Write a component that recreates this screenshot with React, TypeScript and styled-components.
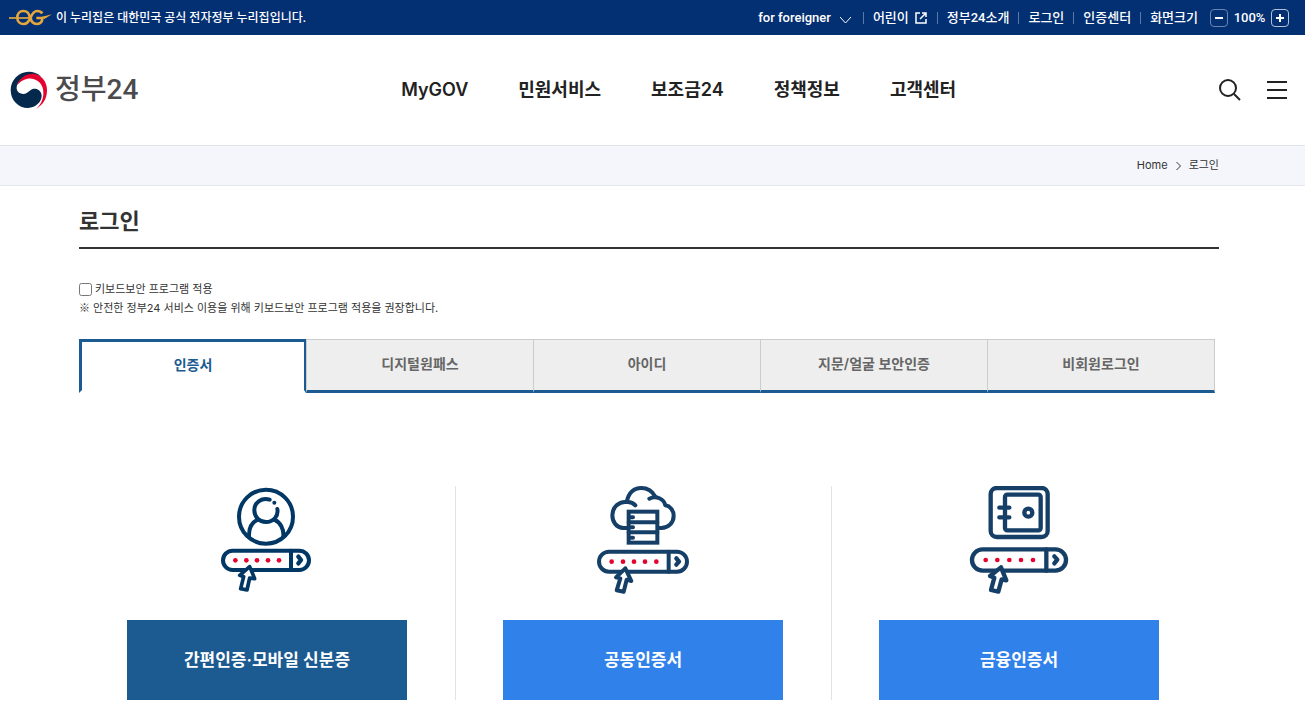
import React from "react";
import styled, { createGlobalStyle } from "styled-components";

const NAVY = "#003764";
const BLUE = "#1c5a92";
const RED = "#e4032e";

const GlobalStyle = createGlobalStyle`
  *, *::before, *::after { box-sizing: border-box; }
  body {
    margin: 0;
    background: #fff;
    color: #333;
    font-family: Inter, "Noto Sans CJK KR", sans-serif;
    font-size: 11px;
    line-height: 19px;
  }
  h1, p, ul, ol { margin: 0; padding: 0; }
  ul, ol { list-style: none; }
  a { color: inherit; text-decoration: none; }
  button { font: inherit; color: inherit; border: 0; padding: 0; background: none; cursor: pointer; }
  svg { display: block; flex: none; }
`;

const TopBar = styled.div`
  display: flex;
  align-items: center;
  justify-content: space-between;
  height: 35px;
  padding: 0 16px 0 9px;
  background: #032f73;
  color: #fff;
  font-family: Roboto, "Noto Sans CJK KR", sans-serif;
  font-size: 13px;
  font-weight: 500;
`;

const Official = styled.p`
  display: flex;
  align-items: center;
  gap: 4px;
  font-size: 12px;
  line-height: 20px;
`;

const UtilList = styled.ul`
  display: flex;
  align-items: center;
`;

const UtilItem = styled.li`
  display: flex;
  align-items: center;

  & + &::before {
    content: "";
    width: 1px;
    height: 12px;
    margin: 0 9px;
    background: #5c78a6;
  }
`;

const UtilLink = styled.a`
  display: flex;
  align-items: center;
  gap: 5px;
`;

const UtilButton = styled.button`
  display: flex;
  align-items: center;
  gap: 8px;
`;

const ZoomGroup = styled.div`
  display: flex;
  align-items: center;
  gap: 4px;
  margin-left: 12px;
`;

const ZoomValue = styled.span`
  min-width: 35px;
  text-align: center;
`;

const ZoomButton = styled.button<{ $dim?: boolean }>`
  display: grid;
  place-items: center;
  width: 18px;
  height: 18px;
  border: 1px solid ${(p) => (p.$dim ? "#6b84ae" : "#b3c0d5")};
  border-radius: 4px;
`;

const Header = styled.header`
  display: flex;
  align-items: center;
  justify-content: space-between;
  height: 110px;
  padding: 0 18px 0 10px;
`;

const Logo = styled.a`
  display: flex;
  align-items: center;
  gap: 7px;
  color: #4b4b4d;
  font-family: Roboto, "Noto Sans CJK KR", sans-serif;
  font-size: 28px;
  font-weight: 500;
  line-height: 38px;
`;

const MainNav = styled.ul`
  display: flex;
  gap: 50px;
  color: #222;
  font-size: 18px;
  font-weight: 600;
  line-height: 28px;
`;

const Tools = styled.div`
  display: flex;
  align-items: center;
  gap: 26px;
`;

const CrumbBar = styled.nav`
  height: 41px;
  padding: 0 86px 0 79px;
  border-top: 1px solid #dfe3ea;
  border-bottom: 1px solid #e4e7ee;
  background: #f5f6fb;
`;

const Crumbs = styled.ol`
  display: flex;
  align-items: center;
  justify-content: flex-end;
  gap: 8px;
  height: 39px;

  li {
    display: flex;
    align-items: center;
    gap: 8px;
  }
`;

const Main = styled.main`
  padding: 0 86px 22px 79px;
`;

const Title = styled.h1`
  padding: 17px 0 8px;
  border-bottom: 2px solid #333;
  font-size: 22px;
  font-weight: 600;
  line-height: 36px;
`;

const Security = styled.div`
  margin: 31px 0 21px;
`;

const NoteMark = styled.span`
  font-family: "Noto Sans CJK KR", sans-serif;
  line-height: 1;
`;

const CheckLabel = styled.label`
  display: flex;
  align-items: center;
  gap: 3px;
`;

const Checkbox = styled.input`
  width: 13px;
  height: 13px;
  margin: 0;
`;

const Tabs = styled.div`
  display: grid;
  grid-template-columns: repeat(5, 1fr);
  height: 54px;
  margin-right: 5px;
  font-size: 14px;
  font-weight: 600;
`;

const Tab = styled.button<{ $active?: boolean }>`
  padding-bottom: 3px;
  border-style: solid;
  border-width: ${(p) => (p.$active ? "3px 2px 3px 3px" : "1px 0 3px 1px")};
  border-color: ${(p) =>
    p.$active ? `${BLUE} ${BLUE} #fff` : `#ccc #ccc ${BLUE}`};
  background: ${(p) => (p.$active ? "#fff" : "#eee")};
  color: ${(p) => (p.$active ? BLUE : "#666")};

  &:last-child {
    margin-right: -1px;
    border-right-width: 1px;
  }
`;

const Methods = styled.ul`
  display: grid;
  grid-template-columns: repeat(3, 1fr);
  margin: 93px 12px 0 0;
`;

const Method = styled.li`
  display: flex;
  flex-direction: column;
  align-items: center;
  gap: 25px;
  padding: 0 48px;

  & + & {
    box-shadow: inset 1px 0 0 #e3e3e3;
  }
`;

const MethodButton = styled.button<{ $primary?: boolean }>`
  width: 100%;
  height: 80px;
  background: ${(p) => (p.$primary ? BLUE : "#3181ea")};
  color: #fff;
  font-size: 17px;
  font-weight: 600;
`;

const EgMark = () => (
  <svg width="43" height="17" viewBox="0 0 129 51" fill="none" stroke="#e3a73e" strokeWidth="8" aria-hidden="true">
    <path d="M0 27H62" strokeWidth="5" />
    <path d="M62 27C62 13 53 6 43 6C32 6 25 15 25 26C25 38 33 45 44 45C55 45 60 37 65 26C70 12 77 6 85 6C92 6 97 9 100 13" />
    <path d="M65 26C66 39 74 45 84 45C95 45 100 38 100 27H82" />
    <path d="M96 24L129 16L106 30Z" fill="#e3a73e" stroke="none" />
  </svg>
);

const Taegeuk = () => (
  <svg width="38" height="38" viewBox="0 0 114 114" aria-hidden="true">
    <path d="M95 17C83 7 70 2 56 2C26 2 2 27 2 57C2 88 25 111 54 111C78 110 96 92 95 73C93 54 74 48 62 57C52 66 43 73 31 67C20 62 17 51 23 38C36 14 66 4 95 17Z" fill="#05294d" />
    <path d="M21 43C33 13 58 5 78 10C100 17 111 37 111 58C111 85 97 103 79 113C98 95 104 72 98 50C88 20 48 10 21 43Z" fill={RED} />
  </svg>
);

const ChevronDown = () => (
  <svg width="15" height="12" viewBox="0 0 15 12" fill="none" stroke="#fff" aria-hidden="true">
    <path d="M1 5L6.500 11L12 5" />
  </svg>
);

const ExternalIcon = () => (
  <svg width="14" height="14" viewBox="0 0 14 14" fill="none" stroke="#fff" strokeWidth="1.500" aria-hidden="true">
    <path d="M6 2H2V12H12V8M8 2H12V6M12 2L6 8" />
  </svg>
);

const SearchIcon = () => (
  <svg width="22" height="22" viewBox="0 0 22 22" fill="none" stroke="#222" strokeWidth="2" aria-hidden="true">
    <circle cx="9" cy="9" r="8" />
    <path d="M15 15L21 21" />
  </svg>
);

const MenuIcon = () => (
  <svg width="20" height="18" viewBox="0 0 20 18" stroke="#222" strokeWidth="2" aria-hidden="true">
    <path d="M0 1H20M0 9H20M0 17H20" />
  </svg>
);

const CrumbArrow = () => (
  <svg width="5" height="9" viewBox="0 0 5 9" fill="none" stroke="#333" aria-hidden="true">
    <path d="M0.500 1L4.500 5L0.500 9" />
  </svg>
);

const SimpleAuthIcon = () => (
  <svg width="120" height="109" viewBox="6 33 360 327" fill="none" stroke={NAVY} strokeWidth="12" strokeLinecap="round" strokeLinejoin="round" aria-hidden="true">
    <circle cx="183" cy="125" r="81" />
    <path d="M194 74C170 67 148 82 148 106C148 126 163 141 183 141C205 141 221 124 217 102" />
    <circle cx="208" cy="83" r="6" fill={NAVY} stroke="none" />
    <path d="M158 134C140 142 131 162 132 185M208 134C226 142 237 162 235 185" />
    <rect x="54" y="227" width="258" height="58" rx="29" />
    <path d="M258 227V285" />
    <path d="M280 245L288 255L280 265" strokeWidth="13" />
    <g fill={RED} stroke="none">
      {[91, 124, 156, 189, 222].map((x) => (
        <circle key={x} cx={x} cy="256" r="7" />
      ))}
    </g>
    <path d="M134 275L104 301L116 305L107 341L126 345L134 309L149 311Z" fill="#fff" strokeWidth="11" />
  </svg>
);

const JointCertIcon = () => (
  <svg width="120" height="109" viewBox="0 33 360 327" fill="none" stroke="#163f68" strokeWidth="12" strokeLinecap="round" strokeLinejoin="round" aria-hidden="true">
    <path d="M132 159H121C101 158 88 142 88 121C88 97 108 78 131 81C137 53 152 39 175 39C195 39 208 48 217 65" />
    <path d="M131 81C143 80 151 84 157 91M199 71C219 61 243 71 247 91C261 93 272 106 272 122C272 143 257 158 235 159H228" />
    <rect x="137" y="110" width="86" height="93" strokeLinejoin="miter" />
    <path d="M137 142H223M137 172H223M145 127H150M145 157H150M145 188H150" />
    <rect x="48" y="230" width="264" height="60" rx="30" />
    <path d="M257 230V290" />
    <path d="M280 250L288 260L280 269" strokeWidth="13" />
    <g fill={RED} stroke="none">
      {[86, 120, 153, 186, 220].map((x) => (
        <circle key={x} cx={x} cy="260" r="7" />
      ))}
    </g>
    <path d="M127 280L99 307L112 310L101 346L122 350L131 314L145 318Z" fill="#fff" />
  </svg>
);

const FinanceCertIcon = () => (
  <svg width="120" height="109" viewBox="0 33 360 327" fill="none" stroke="#163f68" strokeWidth="13" strokeLinecap="round" strokeLinejoin="round" aria-hidden="true">
    <rect x="95" y="39" width="171" height="147" rx="18" />
    <rect x="138" y="59" width="107" height="107" rx="7" />
    <circle cx="208" cy="113" r="12" />
    <path d="M121 98H151M121 127H151" />
    <rect x="39" y="223" width="282" height="64" rx="32" />
    <path d="M262 223V287" />
    <path d="M286 244L295 254L286 265" />
    <g fill={RED} stroke="none">
      {[80, 115, 151, 186, 222].map((x) => (
        <circle key={x} cx={x} cy="255" r="7" />
      ))}
    </g>
    <path d="M126 277L93 303L106 308L96 345L118 350L128 313L142 316Z" fill="#fff" />
  </svg>
);

const NAV = ["MyGOV", "민원서비스", "보조금24", "정책정보", "고객센터"];
const TABS = ["인증서", "디지털원패스", "아이디", "지문/얼굴 보안인증", "비회원로그인"];
const METHODS = [
  { label: "간편인증·모바일 신분증", Icon: SimpleAuthIcon },
  { label: "공동인증서", Icon: JointCertIcon },
  { label: "금융인증서", Icon: FinanceCertIcon },
];

export default function App() {
  return (
    <>
      <GlobalStyle />
      <TopBar>
        <Official>
          <EgMark />
          이 누리집은 대한민국 공식 전자정부 누리집입니다.
        </Official>
        <UtilList>
          <UtilItem>
            <UtilButton type="button">
              for foreigner
              <ChevronDown />
            </UtilButton>
          </UtilItem>
          <UtilItem>
            <UtilLink href="#kids">
              어린이
              <ExternalIcon />
            </UtilLink>
          </UtilItem>
          <UtilItem><UtilLink href="#about">정부24소개</UtilLink></UtilItem>
          <UtilItem><UtilLink href="#login">로그인</UtilLink></UtilItem>
          <UtilItem><UtilLink href="#cert">인증센터</UtilLink></UtilItem>
          <UtilItem>
            화면크기
            <ZoomGroup>
              <ZoomButton type="button" $dim aria-label="화면 축소">
                <svg width="8" height="8" viewBox="0 0 8 8" stroke="#fff" strokeWidth="2"><path d="M0 4H8" /></svg>
              </ZoomButton>
              <ZoomValue>100%</ZoomValue>
              <ZoomButton type="button" aria-label="화면 확대">
                <svg width="8" height="8" viewBox="0 0 8 8" stroke="#fff" strokeWidth="2"><path d="M0 4H8M4 0V8" /></svg>
              </ZoomButton>
            </ZoomGroup>
          </UtilItem>
        </UtilList>
      </TopBar>

      <Header>
        <Logo href="#home">
          <Taegeuk />
          정부24
        </Logo>
        <nav aria-label="주 메뉴">
          <MainNav>
            {NAV.map((item) => (
              <li key={item}><a href="#menu">{item}</a></li>
            ))}
          </MainNav>
        </nav>
        <Tools>
          <button type="button" aria-label="검색"><SearchIcon /></button>
          <button type="button" aria-label="전체 메뉴"><MenuIcon /></button>
        </Tools>
      </Header>

      <CrumbBar aria-label="현재 위치">
        <Crumbs>
          <li><a href="#home">Home</a><CrumbArrow /></li>
          <li><a href="#login">로그인</a></li>
        </Crumbs>
      </CrumbBar>

      <Main>
        <Title>로그인</Title>
        <Security>
          <CheckLabel htmlFor="keyboard-security">
            <Checkbox type="checkbox" id="keyboard-security" />
            키보드보안 프로그램 적용
          </CheckLabel>
          <p><NoteMark>※</NoteMark> 안전한 정부24 서비스 이용을 위해 키보드보안 프로그램 적용을 권장합니다.</p>
        </Security>
        <Tabs role="tablist">
          {TABS.map((tab, i) => (
            <Tab key={tab} type="button" role="tab" aria-selected={i === 0} $active={i === 0}>
              {tab}
            </Tab>
          ))}
        </Tabs>
        <Methods>
          {METHODS.map(({ label, Icon }, i) => (
            <Method key={label}>
              <Icon />
              <MethodButton type="button" $primary={i === 0}>{label}</MethodButton>
            </Method>
          ))}
        </Methods>
      </Main>
    </>
  );
}
